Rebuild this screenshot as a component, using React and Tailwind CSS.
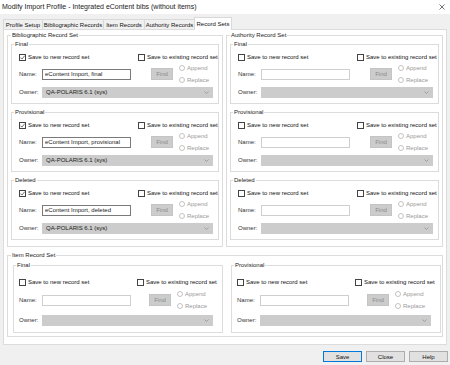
import React from "react";

function Check({ checked }) {
  return (
    <span className="w-[7px] h-[7px] border border-[#444444] bg-white flex items-center justify-center shrink-0">
      {checked && (
        <svg width="5" height="5" viewBox="0 0 5 5">
          <path d="M0.4 2.6 L1.9 4.1 L4.7 0.7" fill="none" stroke="#333333" strokeWidth="0.7" />
        </svg>
      )}
    </span>
  );
}

function Radio({ label }) {
  return (
    <div className="flex items-center h-[12px] gap-[2px] whitespace-nowrap">
      <span className="w-[6px] h-[6px] rounded-full border border-[#c4c4c4] bg-white shrink-0" />
      <span className="text-[#9a9a9a]">{label}</span>
    </div>
  );
}

function Chevron() {
  return (
    <svg width="5" height="3" viewBox="0 0 5 3" className="shrink-0">
      <path d="M0.5 0.5 L2.5 2.5 L4.5 0.5" fill="none" stroke="#8a8a8a" strokeWidth="0.7" />
    </svg>
  );
}

function RecordBox({ title, checked, name, owner, item }) {
  const enabled = name !== undefined;
  return (
    <fieldset className="border border-[#dcdcdc] p-0 m-0 min-w-0">
      <legend className="ml-[2px] px-[1px] leading-[8px] text-[#222222]">{title}</legend>
      <div className={item ? "pl-[5px] pr-[9px] pt-[8px] pb-[6px]" : "pl-[7px] pr-[5px] pt-[4px] pb-[5px]"}>
        <div className="flex items-center h-[10px] whitespace-nowrap">
          <div className={item ? "flex items-center gap-[2px] w-[118px] shrink-0" : "flex items-center gap-[2px] w-[119px] shrink-0"}>
            <Check checked={checked} />
            <span>Save to new record set</span>
          </div>
          <div className="flex items-center gap-[2px]">
            <Check />
            <span>Save to existing record set</span>
          </div>
        </div>
        <div className={item ? "flex items-center h-[24px] mt-[1px]" : "flex items-center h-[24px]"}>
          <span className="w-[23px] shrink-0 text-[#333333]">Name:</span>
          <div
            className={
              enabled
                ? "w-[89px] h-[11px] shrink-0 border border-[#7a7a7a] bg-white flex items-center pl-[2px] text-[#1a1a1a] whitespace-nowrap overflow-hidden"
                : "w-[89px] h-[11px] shrink-0 border border-[#cfcfcf] bg-white"
            }
          >
            {name}
          </div>
          <div
            className={
              item
                ? "ml-[18px] w-[22px] h-[12px] shrink-0 bg-[#cccccc] border border-[#c4c4c4] text-[#8a8a8a] flex items-center justify-center"
                : "ml-[20px] w-[22px] h-[12px] shrink-0 bg-[#cccccc] border border-[#c4c4c4] text-[#8a8a8a] flex items-center justify-center"
            }
          >
            Find
          </div>
          <div className="ml-[6px] flex flex-col">
            <Radio label="Append" />
            <Radio label="Replace" />
          </div>
        </div>
        <div className={item ? "flex items-center h-[12px] mt-[2px]" : "flex items-center h-[12px]"}>
          <span className="w-[23px] shrink-0 text-[#333333]">Owner:</span>
          <div className="flex-1 h-[11px] bg-[#cccccc] border border-[#cccccc] flex items-center justify-between pl-[3px] pr-[3px] text-[#1a1a1a] whitespace-nowrap">
            <span>{owner}</span>
            <Chevron />
          </div>
        </div>
      </div>
    </fieldset>
  );
}

function GroupSet({ title, children }) {
  return (
    <fieldset className="border border-[#dcdcdc] p-0 m-0 min-w-0">
      <legend className="ml-[3px] px-[1px] leading-[8px] text-[#222222]">{title}</legend>
      <div className="px-[3px] pt-[1px] pb-[6px] flex flex-col gap-[4px]">{children}</div>
    </fieldset>
  );
}

export default function App() {
  const owner = "QA-POLARIS 6.1 (sys)";
  return (
    <div className="w-[450px] h-[365px] bg-[#f0f0f0] font-['Liberation_Sans',Arial,sans-serif] text-[6px] leading-[8px] text-[#111111] overflow-hidden">
      <div className="h-[14px] bg-white flex items-center justify-between pl-[2px] pr-[5px]">
        <span className="text-[7px] text-[#1a1a1a] whitespace-nowrap">Modify Import Profile - Integrated eContent bibs (without items)</span>
        <svg width="6" height="6" viewBox="0 0 6 6">
          <path d="M0.5 0.5 L5.5 5.5 M5.5 0.5 L0.5 5.5" stroke="#333333" strokeWidth="0.7" />
        </svg>
      </div>
      <div className="mt-[3px] ml-[3px] h-[12px] flex items-end whitespace-nowrap">
        <div className="w-[40px] h-[10px] -mr-px border-t border-l border-r border-[#d9d9d9] flex items-center justify-center">Profile Setup</div>
        <div className="w-[62px] h-[10px] -mr-px border-t border-l border-r border-[#d9d9d9] flex items-center justify-center">Bibliographic Records</div>
        <div className="w-[42px] h-[10px] -mr-px border-t border-l border-r border-[#d9d9d9] flex items-center justify-center">Item Records</div>
        <div className="w-[51px] h-[10px] -mr-px border-t border-l border-r border-[#d9d9d9] flex items-center justify-center">Authority Records</div>
        <div className="relative z-10 w-[38px] h-[13px] -mb-px bg-white border-t border-l border-r border-[#d9d9d9] flex items-center justify-center pb-[1px]">Record Sets</div>
      </div>
      <div className="ml-[3px] w-[444px] bg-white border border-[#dcdcdc] px-[3px] pt-[1px] pb-[7px]">
        <div className="grid grid-cols-[216px_217px] gap-x-[3px]">
          <GroupSet title="Bibliographic Record Set">
            <RecordBox title="Final" checked name="eContent Import, final" owner={owner} />
            <RecordBox title="Provisional" checked name="eContent Import, provisional" owner={owner} />
            <RecordBox title="Deleted" checked name="eContent Import, deleted" owner={owner} />
          </GroupSet>
          <GroupSet title="Authority Record Set">
            <RecordBox title="Final" />
            <RecordBox title="Provisional" />
            <RecordBox title="Deleted" />
          </GroupSet>
        </div>
        <fieldset className="mt-[4px] border border-[#dcdcdc] p-0 m-0 min-w-0">
          <legend className="ml-[3px] px-[1px] leading-[8px] text-[#222222]">Item Record Set</legend>
          <div className="pl-[5px] pr-[1px] pt-[2px] pb-[3px] grid grid-cols-2 gap-x-[8px]">
            <RecordBox title="Final" item />
            <RecordBox title="Provisional" item />
          </div>
        </fieldset>
      </div>
      <div className="mt-[6px] pr-[2px] flex justify-end gap-[4px]">
        <div className="w-[39px] h-[11px] bg-[#e1e1e1] border border-[#0078d7] flex items-center justify-center">Save</div>
        <div className="w-[39px] h-[11px] bg-[#e1e1e1] border border-[#adadad] flex items-center justify-center">Close</div>
        <div className="w-[39px] h-[11px] bg-[#e1e1e1] border border-[#adadad] flex items-center justify-center">Help</div>
      </div>
    </div>
  );
}
